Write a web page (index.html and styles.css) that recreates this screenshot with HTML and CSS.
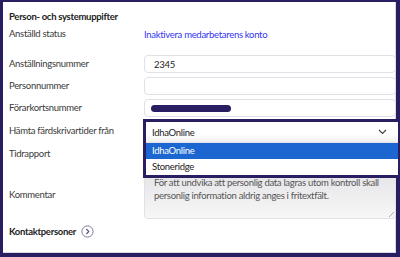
FILE: index.html
```html
<!DOCTYPE html>
<html lang="sv">
<head>
    <meta charset="UTF-8">
    <meta name="viewport" content="width=device-width, initial-scale=1.0">
    <title>Person- och systemuppifter</title>
    <link rel="stylesheet" href="styles.css">
</head>
<body>
    <div class="frame">
        <div class="panel">
            <h3 class="title">Person- och systemuppifter</h3>

            <div class="row row-status">
                <span class="label">Anställd status</span>
                <a class="link" href="#">Inaktivera medarbetarens konto</a>
            </div>

            <div class="row row-first">
                <label class="label" for="empno">Anställningsnummer</label>
                <input class="field" type="text" id="empno" value="2345">
            </div>

            <div class="row row-tight">
                <label class="label" for="pno">Personnummer</label>
                <input class="field" type="text" id="pno">
            </div>

            <div class="row row-tight">
                <label class="label" for="card">Förarkortsnummer</label>
                <div class="field field-masked"><span class="redacted"></span></div>
            </div>

            <div class="row row-select">
                <span class="label">Hämta färdskrivartider från</span>
                <div class="select-wrap">
                    <div class="field select-field"></div>
                    <!-- open dropdown sits over the rows below -->
                    <div class="dropdown">
                        <div class="dropdown-current">
                            <span>IdhaOnline</span>
                            <svg class="chevron" width="9" height="6" viewBox="0 0 9 6">
                                <path d="M1 1 L4.5 4.5 L8 1" fill="none" stroke="#444" stroke-width="1.2"/>
                            </svg>
                        </div>
                        <div class="option option-active">IdhaOnline</div>
                        <div class="option">Stoneridge</div>
                    </div>
                </div>
            </div>

            <div class="row row-time">
                <span class="label">Tidrapport</span>
                <span></span>
            </div>

            <div class="row row-comment">
                <label class="label" for="comment">Kommentar</label>
                <div class="textarea" id="comment">
                    För att undvika att personlig data lagras utom kontroll skall personlig information aldrig anges i fritextfält.
                    <span class="grip"></span>
                </div>
            </div>

            <div class="contacts">
                <span class="contacts-title">Kontaktpersoner</span>
                <svg class="circle-btn" width="13" height="13" viewBox="0 0 13 13">
                    <circle cx="6.5" cy="6.5" r="5.6" fill="none" stroke="#7b7b9c" stroke-width="1"/>
                    <path d="M5.4 4 L7.8 6.5 L5.4 9" fill="none" stroke="#55557a" stroke-width="1.1"/>
                </svg>
            </div>
        </div>
    </div>
</body>
</html>
```

FILE: styles.css
```css
html, body {
    margin: 0;
    padding: 0;
}
body {
    font-family: Lato, "Open Sans", Arial, sans-serif;
    font-size: 9.5px;
    letter-spacing: -0.3px;
    color: #333;
    width: 400px;
    height: 257px;
    overflow: hidden;
}
.frame {
    box-sizing: border-box;
    width: 400px;
    height: 257px;
    border-style: solid;
    border-color: #2a1e62;
    border-width: 2px 4px 4px 3px;
    background: #fff;
    box-shadow: inset -1px -1px 0 #d9d9e3;
}
.panel {
    padding: 8px 0 0 6px;
}
.title {
    margin: 0;
    font-size: 9.5px;
    font-weight: 700;
    line-height: 14px;
    color: #222;
}
.row {
    display: grid;
    grid-template-columns: 135px 1fr;
    align-items: center;
}
.label {
    line-height: 14px;
    color: #3a3a3a;
}
.row-status {
    margin-top: 3px;
    height: 14px;
}
.link {
    color: #3535f5;
    text-decoration: none;
}
.row-first {
    margin-top: 14px;
}
.row-tight {
    margin-top: 4px;
}
.field {
    box-sizing: border-box;
    height: 18px;
    width: 100%;
    margin: 0;
    padding: 0 9px;
    border: 1px solid #e0e0e6;
    border-radius: 4px;
    background: #fff;
    font: inherit;
    letter-spacing: inherit;
    color: #222;
    outline: none;
}
.field-masked {
    display: flex;
    align-items: center;
    padding-left: 6px;
}
.redacted {
    display: block;
    width: 80px;
    height: 7px;
    border-radius: 4px;
    background: #2a1e62;
}
.row-select {
    margin-top: 4px;
}
.select-wrap {
    position: relative;
}
.select-field {
    height: 20px;
}
.dropdown {
    position: absolute;
    top: -2px;
    left: -1px;
    right: -5px;
    z-index: 2;
    border: 3px solid #2a1e62;
    background: #fff;
}
.dropdown-current {
    display: flex;
    align-items: center;
    justify-content: space-between;
    height: 20px;
    padding: 0 11px 0 6px;
    background: linear-gradient(#fff 60%, #f0f0f2);
    border-bottom: 1px solid #e2e2e8;
    color: #222;
}
.option {
    height: 16px;
    line-height: 16px;
    padding-left: 6px;
    color: #222;
}
.option-active {
    background: #1b66d0;
    color: #fff;
}
.row-time {
    margin-top: 6px;
    height: 14px;
}
.row-comment {
    margin-top: 10px;
}
.textarea {
    position: relative;
    box-sizing: border-box;
    height: 48px;
    padding: 4px 10px 0 9px;
    border: 1px solid #e0e0e6;
    border-radius: 4px;
    background: linear-gradient(#e4e4e6, #f7f7f8);
    color: #555;
    line-height: 13px;
}
.grip {
    position: absolute;
    right: 1px;
    bottom: 1px;
    width: 5px;
    height: 5px;
    background: linear-gradient(135deg, transparent 45%, #aaa 45%, #aaa 55%, transparent 55%);
}
.contacts {
    display: flex;
    align-items: center;
    gap: 5px;
    margin-top: 5px;
    height: 14px;
}
.contacts-title {
    font-weight: 700;
    color: #222;
}
```
